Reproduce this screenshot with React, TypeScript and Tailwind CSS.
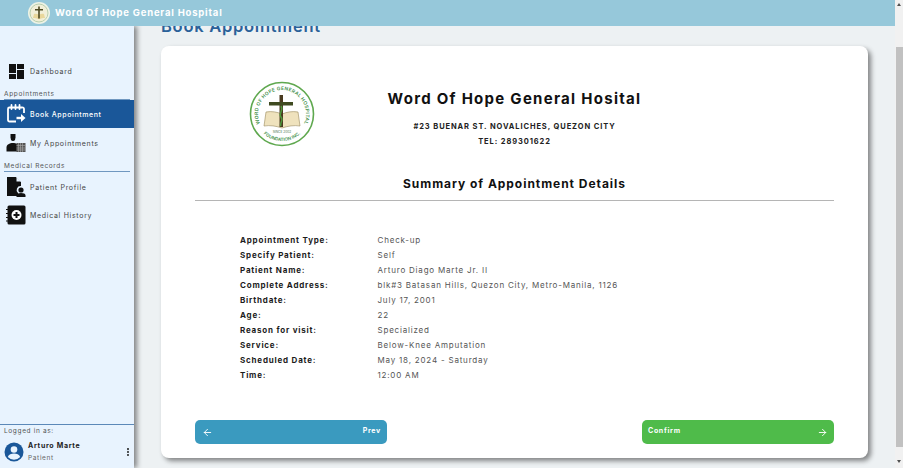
import { ArrowLeft, ArrowRight, EllipsisVertical } from 'lucide-react';
import type { ReactNode } from 'react';

const details = [
  ['Appointment Type:', 'Check-up'],
  ['Specify Patient:', 'Self'],
  ['Patient Name:', 'Arturo Diago Marte Jr. II'],
  ['Complete Address:', 'blk#3 Batasan Hills, Quezon City, Metro-Manila, 1126'],
  ['Birthdate:', 'July 17, 2001'],
  ['Age:', '22'],
  ['Reason for visit:', 'Specialized'],
  ['Service:', 'Below-Knee Amputation'],
  ['Scheduled Date:', 'May 18, 2024 - Saturday'],
  ['Time:', '12:00 AM'],
];

function HospitalLogo() {
  return (
    <svg width="66" height="66" viewBox="0 0 66 66">
      <defs>
        <path id="arcTop" d="M13.300 46.800A24 24 0 1 1 52.700 46.800" />
        <path id="arcBot" d="M12.300 50.400A27 27 0 0 0 53.700 50.400" />
      </defs>
      <circle cx="33" cy="33" r="31.500" fill="#fff" stroke="#5fa84f" strokeWidth="1.600" />
      <text fontSize="4.800" fontWeight="600" letterSpacing="0.3" fill="#3f8f4a" textAnchor="middle" fontFamily="Inter, sans-serif">
        <textPath href="#arcTop" startOffset="50%">WORD OF HOPE GENERAL HOSPITAL</textPath>
      </text>
      <text fontSize="4.500" fontWeight="600" fill="#3f8f4a" textAnchor="middle" fontFamily="Inter, sans-serif">
        <textPath href="#arcBot" startOffset="50%">FOUNDATION INC.</textPath>
      </text>
      <path d="M17 31c6-1 11 0 16 2 5-2 10-3 16-2l2 14c-6-1-12 0-18 2-6-2-12-3-18-2z" fill="#efe2bd" stroke="#9a8a5c" strokeWidth="0.600" />
      <rect x="30.500" y="14" width="3.500" height="32" fill="#4a3a20" />
      <rect x="20" y="21" width="24" height="3.500" fill="#3f4a20" />
      <path d="M32 25c3 5-3 7 0 11s-2 6 0 9" fill="none" stroke="#4f9a3d" strokeWidth="1.500" />
      <text x="33" y="52" textAnchor="middle" fontSize="3.200" fill="#3f6f4a" fontFamily="Inter, sans-serif">SINCE 2002</text>
    </svg>
  );
}

function NavItem({ icon, label, active }: { icon: ReactNode; label: string; active?: boolean }) {
  return (
    <div
      className={`flex h-[28px] items-center pl-[6px] text-[7px] ${active ? 'bg-[#1a5799] font-medium tracking-[0.085em] text-white' : 'tracking-[0.1em] text-[#444]'}`}
    >
      <span className="flex w-[20px] justify-center">{icon}</span>
      <span className="ml-[4px] pt-[2px]">{label}</span>
    </div>
  );
}

function SectionLabel({ text }: { text: string }) {
  return (
    <div className="mx-[4px] border-b border-[#6f97c0] text-[6.500px] leading-[9px] tracking-[0.1em] text-[#555]">
      {text}
    </div>
  );
}

export default function App() {
  return (
    <div className="flex h-[468px] w-[903px] overflow-hidden bg-[#edf1f3] font-['Inter',sans-serif]">
      <div className="flex w-[895px] flex-col">
        <header className="z-20 flex h-[26px] shrink-0 items-center bg-[#96c8da] pl-[28px]">
          <div className="flex h-[22px] w-[22px] items-center justify-center overflow-hidden rounded-full bg-[#eef3e6]">
            <svg width="20" height="20" viewBox="0 0 20 20">
              <circle cx="10" cy="10" r="9" fill="#f1efd8" stroke="#b9cfae" strokeWidth="1" />
              <path d="M5 11c2-.5 3.500 0 5 1 1.500-1 3-1.500 5-1l1 4c-2 0-4 .3-6 1.200-2-.9-4-1.200-6-1.200z" fill="#e8d79c" />
              <rect x="9.200" y="3.500" width="1.600" height="12" fill="#4d4a22" />
              <rect x="6" y="6" width="8" height="1.500" fill="#4d4a22" />
            </svg>
          </div>
          <span className="ml-[5px] text-[9.500px] font-bold tracking-[0.085em] text-white">Word Of Hope General Hospital</span>
        </header>

        <div className="flex min-h-0 flex-1">
          <aside className="z-10 flex w-[134px] shrink-0 flex-col bg-[#e8f3fe] shadow-[3px_0_5px_rgba(0,0,0,0.45)]">
            <div className="pt-[31px]">
              <NavItem
                label="Dashboard"
                icon={
                  <svg width="15" height="15" viewBox="0 0 15 15" fill="#111">
                    <rect x="0" y="0" width="7" height="9" />
                    <rect x="8" y="0" width="7" height="5" />
                    <rect x="0" y="10" width="7" height="5" />
                    <rect x="8" y="6" width="7" height="9" />
                  </svg>
                }
              />
            </div>
            <div className="mt-[5px]">
              <SectionLabel text="Appointments" />
            </div>
            <NavItem
              active
              label="Book Appointment"
              icon={
                <svg width="20" height="20" viewBox="0 0 20 20" fill="none" stroke="#fff" strokeWidth="1.800">
                  <path d="M10 17.500H3.500A1.500 1.500 0 0 1 2 16V5a1.500 1.500 0 0 1 1.500-1.500h12.500A1.500 1.500 0 0 1 18 5v4" />
                  <path d="M5.500 1v4M9.500 1v4M13.500 1v4" strokeLinecap="round" />
                  <path d="M10.500 14h6" strokeWidth="2.400" />
                  <path d="M15 10l4.500 4-4.500 4z" fill="#fff" stroke="none" />
                </svg>
              }
            />
            <div className="mt-[1px]">
              <NavItem
                label="My Appointments"
                icon={
                  <svg width="20" height="20" viewBox="0 0 20 20">
                    <path d="M4.500 1h5v3.500l-.5 2.500a2.500 2.500 0 0 1-4 0l-.5-2.500z" fill="#111" />
                    <path d="M0.500 18.500v-4c0-3 3-4.500 6.500-4.500 1.500 0 3 .3 4 1v7.500z" fill="#111" />
                    <rect x="10.500" y="10" width="9" height="9" fill="#555" />
                    <path d="M12.500 10v9M14.500 10v9M16.500 10v9M10.500 12.500h9M10.500 15h9M10.500 17h9" stroke="#aaa" strokeWidth="0.600" />
                  </svg>
                }
              />
            </div>
            <div className="mt-[5px]">
              <SectionLabel text="Medical Records" />
            </div>
            <div className="mt-[1px]">
              <NavItem
                label="Patient Profile"
                icon={
                  <svg width="20" height="20" viewBox="0 0 20 20" fill="#111">
                    <path d="M1 0h9l5 5v4a4 4 0 0 0-3 7v3H1z" />
                    <path d="M10.500 0v4.500H15z" fill="#e8f3fe" />
                    <circle cx="15" cy="13" r="2.600" />
                    <path d="M10.500 20v-1.500c0-1.800 2-2.500 4.500-2.500s4.500.7 4.500 2.500V20z" />
                  </svg>
                }
              />
            </div>
            <NavItem
              label="Medical History"
              icon={
                <svg width="20" height="20" viewBox="0 0 20 20">
                  <rect x="1.500" y="0.500" width="18" height="19" rx="1.500" fill="#111" />
                  <path d="M0 4.500h3M0 8.500h3M0 12.500h3M0 16h3" stroke="#111" strokeWidth="1" />
                  <circle cx="10.500" cy="10" r="5" fill="#fff" />
                  <path d="M10.500 7v6M7.500 10h6" stroke="#111" strokeWidth="2" />
                </svg>
              }
            />

            <div className="mt-auto h-[44px] border-t border-[#5b88b8] px-[4px]">
              <div className="pt-[1px] text-[6.500px] leading-[10px] tracking-[0.1em] text-[#555]">Logged in as:</div>
              <div className="mt-[6px] flex items-start">
                <svg width="20" height="20" viewBox="0 0 20 20" className="shrink-0">
                  <circle cx="10" cy="10" r="9.500" fill="#1a5799" />
                  <circle cx="10" cy="7.500" r="3.300" fill="#e8f3fe" />
                  <path d="M3.800 15c1-2.600 3.500-3.500 6.200-3.500s5.200.9 6.200 3.500a8.500 8.500 0 0 1-12.400 0z" fill="#e8f3fe" />
                </svg>
                <div className="ml-[4px] flex-1">
                  <div className="-mt-[1px] text-[7px] font-bold leading-[10px] tracking-[0.1em] text-[#222]">Arturo Marte</div>
                  <div className="mt-[3px] text-[6.500px] leading-[9px] tracking-[0.1em] text-[#666]">Patient</div>
                </div>
                <EllipsisVertical size={10} strokeWidth={3} className="-mr-[3px] mt-[5px] text-[#222]" />
              </div>
            </div>
          </aside>

          <main className="min-w-0 flex-1 overflow-hidden px-[27px]">
            <h1 className="-mt-[10px] h-[30px] text-[16.500px] font-semibold leading-[20px] tracking-[0.045em] text-[#2a6199]">Book Appointment</h1>
            <section className="h-[412px] w-[707px] rounded-[8px] bg-white px-[34px] shadow-[3px_3px_5px_rgba(0,0,0,0.45)]">
              <div className="flex h-[127px]">
                <div className="ml-[54px] mt-[35px] shrink-0">
                  <HospitalLogo />
                </div>
                <div className="flex flex-1 flex-col items-center pr-[120px]">
                  <h2 className="mt-[43px] text-[15px] font-bold leading-[20px] tracking-[0.085em] text-[#111]">Word Of Hope General Hosital</h2>
                  <p className="mt-[10px] text-[7.500px] font-bold leading-[15px] tracking-[0.12em] text-[#222]">#23 BUENAR ST. NOVALICHES, QUEZON CITY</p>
                  <p className="text-[7.500px] font-bold leading-[15px] tracking-[0.12em] text-[#222]">TEL: 289301622</p>
                </div>
              </div>
              <div className="h-[28px] border-b border-[#b5b5b5] pt-[1px] text-center text-[12px] font-bold leading-[20px] tracking-[0.08em] text-[#111]">
                Summary of Appointment Details
              </div>
              <div className="ml-[45px] mt-[31px] flex flex-col">
                {details.map(([label, value]) => (
                  <div key={label} className="flex h-[15px] items-center text-[8px] tracking-[0.1em]">
                    <span className="w-[137.500px] font-bold text-[#1c1c1c]">{label}</span>
                    <span className="text-[#555]">{value}</span>
                  </div>
                ))}
              </div>
              <div className="mt-[38px] flex justify-between">
                <button className="flex h-[24px] w-[192px] items-center justify-between rounded-[5px] bg-[#3a9abf] pl-[7px] pr-[6px] text-[7px] font-bold tracking-[0.1em] text-white">
                  <ArrowLeft size={11} />
                  <span className="mb-[1px]">Prev</span>
                </button>
                <button className="flex h-[24px] w-[192px] items-center justify-between rounded-[5px] bg-[#4fbb4a] px-[6px] text-[7px] font-bold tracking-[0.1em] text-white">
                  <span className="mb-[1px]">Confirm</span>
                  <ArrowRight size={11} />
                </button>
              </div>
            </section>
          </main>
        </div>
      </div>

      <div className="flex w-[8px] shrink-0 flex-col items-center bg-[#f1f1f1]">
        <span className="mt-[3px] h-0 w-0 border-x-[2px] border-b-[3px] border-x-transparent border-b-[#505050]" />
        <div className="mt-[41px] h-[400px] w-[7px] bg-[#c1c1c1]" />
        <span className="mt-[13px] h-0 w-0 border-x-[2px] border-t-[3px] border-x-transparent border-t-[#505050]" />
      </div>
    </div>
  );
}
